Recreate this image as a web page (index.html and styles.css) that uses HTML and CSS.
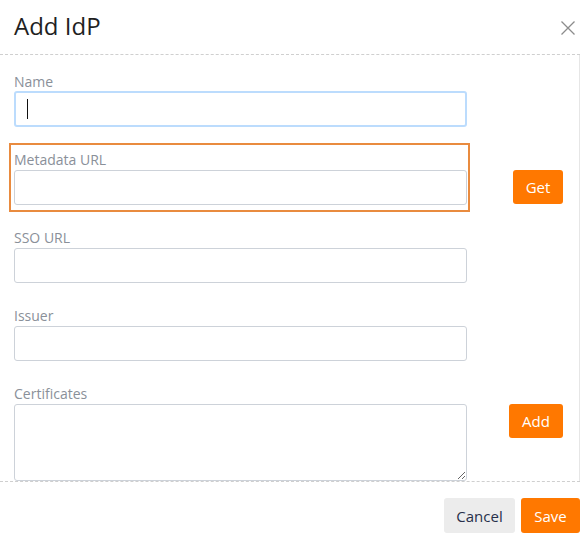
FILE: index.html
```html
<!DOCTYPE html>
<html lang="en">
<head>
<meta charset="utf-8">
<title>Add IdP</title>
<link rel="stylesheet" href="styles.css">
</head>
<body>
<div class="modal">
  <header class="head">
    <h1 class="title">Add IdP</h1>
    <button class="close" type="button" aria-label="Close">
      <svg width="14" height="14" viewBox="0 0 14 14"><path d="M0.5 0.5 L13.5 13.5 M13.5 0.5 L0.5 13.5" stroke="#8c8c8c" stroke-width="1.3" fill="none"/></svg>
    </button>
  </header>
  <div class="body">
    <div class="row">
      <div class="field">
        <label class="label">Name</label>
        <div class="input focus"><span class="caret"></span></div>
      </div>
    </div>
    <div class="row">
      <div class="field highlight">
        <label class="label">Metadata URL</label>
        <input class="input" type="text">
      </div>
      <button class="btn primary get" type="button">Get</button>
    </div>
    <div class="row">
      <div class="field">
        <label class="label">SSO URL</label>
        <input class="input" type="text">
      </div>
    </div>
    <div class="row">
      <div class="field">
        <label class="label">Issuer</label>
        <input class="input" type="text">
      </div>
    </div>
    <div class="row">
      <div class="field">
        <label class="label">Certificates</label>
        <textarea class="input area"></textarea>
      </div>
      <button class="btn primary add" type="button">Add</button>
    </div>
  </div>
  <footer class="foot">
    <button class="btn secondary cancel" type="button">Cancel</button>
    <button class="btn primary save" type="button">Save</button>
  </footer>
</div>
</body>
</html>
```

FILE: styles.css
```css
html, body {
  margin: 0;
  padding: 0;
  background: #ffffff;
}
body {
  font-family: "Open Sans", "Liberation Sans", sans-serif;
  width: 580px;
  height: 543px;
  overflow: hidden;
}
.modal {
  width: 580px;
  height: 543px;
  display: flex;
  flex-direction: column;
}
.head {
  height: 54px;
  border-bottom: 1px dashed #cfcfcf;
  display: flex;
  justify-content: space-between;
  align-items: center;
  padding: 0 5px 0 14px;
  box-sizing: content-box;
}
.title {
  margin: 0;
  font-size: 24px;
  line-height: 29px;
  font-weight: 400;
  color: #1f1f1f;
  align-self: flex-start;
  padding-top: 11px;
}
.close {
  width: 14px;
  height: 14px;
  padding: 0;
  border: 0;
  background: none;
  display: block;
  margin-top: 1px;
}
.close svg { display: block; }
.body {
  height: 426px;
  box-sizing: border-box;
  overflow: hidden;
  border-right: 1px solid #e6e6e6;
  padding: 17px 16px 0 14px;
  display: flex;
  flex-direction: column;
  gap: 23px;
}
.row {
  display: flex;
  justify-content: space-between;
  align-items: flex-start;
  flex-shrink: 0;
}
.field {
  width: 453px;
  box-sizing: content-box;
  display: flex;
  flex-direction: column;
}
.highlight {
  border: 2px solid #e98b3f;
  padding: 5px 1px 5px 3px;
  margin: -7px -3px -7px -5px;
}
.label {
  font-size: 14px;
  line-height: 20px;
  height: 20px;
  color: #8a9099;
}
.input {
  display: block;
  width: 453px;
  height: 35px;
  box-sizing: border-box;
  border: 1px solid #cdd2d9;
  border-radius: 3px;
  background: #fff;
  margin: 0;
  padding: 0 12px;
  font-family: inherit;
  font-size: 14px;
  outline: none;
}
.input.focus {
  border: 2px solid #bcdcfd;
  display: flex;
  align-items: center;
  padding-left: 11px;
  margin-top: -1px;
  height: 36px;
}
.caret {
  display: block;
  width: 1px;
  height: 20px;
  background: #111;
}
.area {
  height: 77px;
  resize: vertical;
  padding: 6px 12px;
}
.btn {
  font-family: inherit;
  font-size: 15px;
  border: 0;
  border-radius: 3px;
  height: 35px;
  padding: 0;
  cursor: pointer;
}
.primary {
  background: #ff7800;
  color: #ffffff;
}
.secondary {
  background: #ececec;
  color: #27304a;
}
.get {
  width: 50px;
  height: 34px;
  margin-top: 20px;
}
.add {
  width: 54px;
  height: 34px;
  margin-top: 20px;
}
.foot {
  border-top: 1px dashed #cfcfcf;
  padding: 16px 0 0 0;
  display: flex;
  justify-content: flex-end;
  gap: 6px;
}
.cancel { width: 71px; }
.save { width: 59px; }
```
